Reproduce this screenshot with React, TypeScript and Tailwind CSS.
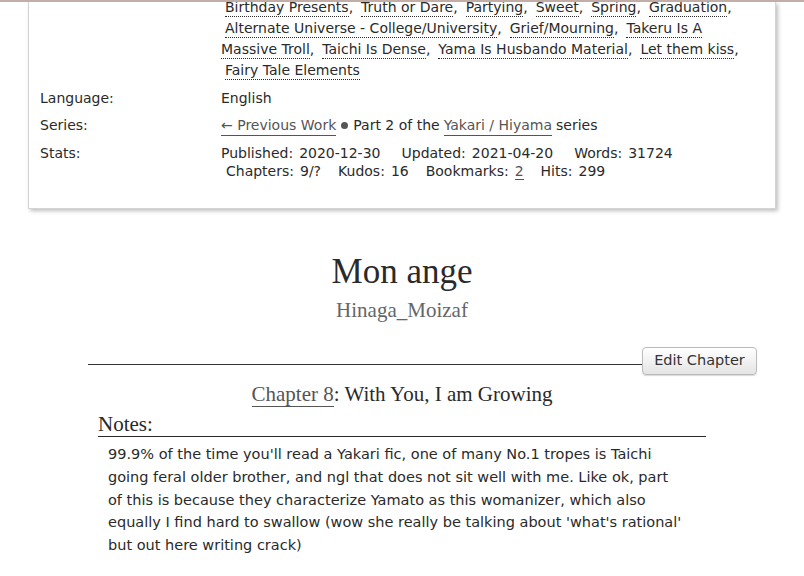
import React from "react";

const sans = { fontFamily: '"DejaVu Sans", Verdana, sans-serif' };
const serif = { fontFamily: '"Liberation Serif", Georgia, serif' };

function Tag({ children, first = true, last = false }) {
  return (
    <span className={first ? "ml-1" : ""}>
      <span className="border-b border-dotted border-[#2a2a2a] pb-px">{children}</span>
      {last ? "" : ","}
    </span>
  );
}

function Stat({ label, value, gap = "", link = false }) {
  return (
    <span className={gap}>
      <span>{label}</span>
      <span className="ml-[6px]">
        {link ? <span className="border-b border-[#555] text-[#555]">{value}</span> : value}
      </span>
    </span>
  );
}

export default function App() {
  return (
    <div
      className="h-[576px] overflow-hidden bg-white border-t-2 border-[#c2aea6] text-[#2a2a2a]"
      style={sans}
    >
      {/* work meta card, scrolled so its top is cut off */}
      <div className="mx-[28px] w-[748px] border-x border-b border-[#d4d4d4] shadow-[2px_2px_4px_rgba(0,0,0,0.25)] pl-[11px] pb-[28px] text-[14px]">
        <div className="grid grid-cols-[181px_1fr]">
          <div />
          <div className="-mt-[5px] leading-[21px] whitespace-nowrap">
            <div>
              <Tag>Birthday Presents</Tag>
              <span className="ml-[4px]" />
              <Tag>Truth or Dare</Tag>
              <span className="ml-[4px]" />
              <Tag>Partying</Tag>
              <span className="ml-[4px]" />
              <Tag>Sweet</Tag>
              <span className="ml-[4px]" />
              <Tag>Spring</Tag>
              <span className="ml-[4px]" />
              <Tag>Graduation</Tag>
            </div>
            <div>
              <Tag>Alternate Universe - College/University</Tag>
              <span className="ml-[4px]" />
              <Tag>Grief/Mourning</Tag>
              <span className="ml-[4px]" />
              <Tag last>Takeru Is A</Tag>
            </div>
            <div>
              <Tag first={false}>Massive Troll</Tag>
              <span className="ml-[4px]" />
              <Tag>Taichi Is Dense</Tag>
              <span className="ml-[4px]" />
              <Tag>Yama Is Husbando Material</Tag>
              <span className="ml-[4px]" />
              <Tag>Let them kiss</Tag>
            </div>
            <div>
              <Tag last>Fairy Tale Elements</Tag>
            </div>
          </div>

          <div className="mt-[7px] leading-[21px]">Language:</div>
          <div className="mt-[7px] leading-[21px]">English</div>

          <div className="mt-[6px] leading-[21px]">Series:</div>
          <div className="mt-[6px] leading-[21px] flex items-center">
            <span className="border-b border-[#555] text-[#555] leading-[20px]">← Previous Work</span>
            <span className="mx-[5px] inline-block h-[7px] w-[7px] rounded-full bg-[#555]" />
            <span>Part 2 of the</span>
            <span className="ml-1 border-b border-[#555] text-[#555] leading-[20px]">Yakari / Hiyama</span>
            <span className="ml-1">series</span>
          </div>

          <div className="mt-[8px] leading-[18px]">Stats:</div>
          <div className="mt-[8px] leading-[18px] whitespace-nowrap">
            <div>
              <Stat label="Published:" value="2020-12-30" />
              <Stat gap="ml-[21px]" label="Updated:" value="2021-04-20" />
              <Stat gap="ml-[21px]" label="Words:" value="31724" />
            </div>
            <div className="pl-[5px]">
              <Stat label="Chapters:" value="9/?" />
              <Stat gap="ml-[17px]" label="Kudos:" value="16" />
              <Stat gap="ml-[17px]" label="Bookmarks:" value="2" link />
              <Stat gap="ml-[17px]" label="Hits:" value="299" />
            </div>
          </div>
        </div>
      </div>

      {/* preface */}
      <div className="mt-[43px] flex flex-col items-center">
        <h2 className="text-[35px] leading-[40px] text-[#2a2a2a]" style={serif}>
          Mon ange
        </h2>
        <div className="mt-[5px] text-[21px] leading-[26px] text-[#666]" style={serif}>
          Hinaga_Moizaf
        </div>
      </div>

      {/* chapter */}
      <div className="mt-[24px] ml-[88px] w-[669px]">
        <div className="flex items-center">
          <div className="flex-1 h-px bg-[#333] mt-[6px]" />
          <button className="h-[28px] w-[115px] rounded-[4px] border border-[#bbb] bg-gradient-to-b from-white to-[#e4e4e4] text-[14.5px] text-[#333] shadow-[0_1px_1px_rgba(0,0,0,0.15)]">
            Edit Chapter
          </button>
        </div>

        <h3 className="mt-[5px] w-[628px] text-center text-[21px] leading-[28px]" style={serif}>
          <span className="border-b border-[#555] text-[#555]">Chapter 8</span>: With You, I am Growing
        </h3>

        <div className="mt-[4px] ml-[10px] w-[608px]">
          <h3 className="text-[21px] leading-[24px] border-b border-[#2a2a2a]" style={serif}>
            Notes:
          </h3>
          <p className="mt-[6px] pl-[10px] text-[14.5px] leading-[22.75px] text-[#2a2a2a]">
            99.9% of the time you'll read a Yakari fic, one of many No.1 tropes is Taichi
            <br />
            going feral older brother, and ngl that does not sit well with me. Like ok, part
            <br />
            of this is because they characterize Yamato as this womanizer, which also
            <br />
            equally I find hard to swallow (wow she really be talking about 'what's rational'
            <br />
            but out here writing crack)
          </p>
        </div>
      </div>
    </div>
  );
}
